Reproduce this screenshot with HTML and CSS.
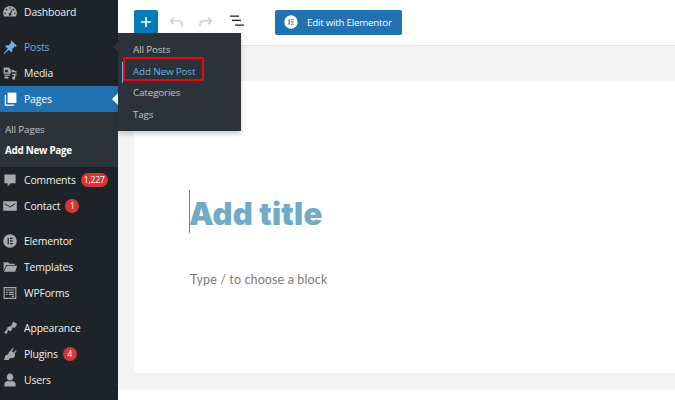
FILE: index.html
```html
<!DOCTYPE html>
<html lang="en">
<head>
<meta charset="utf-8">
<title>Add New Page</title>
<link rel="stylesheet" href="styles.css">
</head>
<body>
<div class="app">
  <nav class="sidebar">
    <a class="item first"><svg class="ic" viewBox="0 0 20 20"><path d="M10 2.500a8.500 8.500 0 0 0-7.200 13l1.600.2h11.200l1.600-.2A8.500 8.500 0 0 0 10 2.500zM10 4a1 1 0 1 1 0 2 1 1 0 0 1 0-2zM5.500 6a1 1 0 1 1 0 2 1 1 0 0 1 0-2zm9 0a1 1 0 1 1 0 2 1 1 0 0 1 0-2zM4 10.500a1 1 0 1 1 0 2 1 1 0 0 1 0-2zm12 0a1 1 0 1 1 0 2 1 1 0 0 1 0-2zM12.500 6.500l.9.500-2.100 4.800a1.700 1.700 0 1 1-1.300-.6z" fill-rule="evenodd"/></svg><span>Dashboard</span></a>
    <a class="item gap current-parent"><svg class="ic" viewBox="0 0 20 20"><path d="M11.500 1.500l7 7-1.300 1.200-1.200-.4-3.300 3.300c.6 1.700.3 3.200-.7 4.400L8.500 13.500l-5.800 5.300-.9-.8 5.400-5.800-3.500-3.500c1.200-1 2.700-1.300 4.400-.7l3.300-3.300-.4-1.200z"/></svg><span>Posts</span></a>
    <a class="item"><svg class="ic" viewBox="0 0 20 20"><path d="M2 3h7l1 2h1v6H2zm3.500 2.500a2 2 0 1 0 0 4 2 2 0 0 0 0-4zM12 6h2.500l1 1.500H18V14l-1 0V9h-5zM3 12h7v1.500l-7 0zM3 14.500h5V17H3zM16.500 11v5.500a2 2 0 1 1-1.500-2V12.500h-2.500v-1.500z" fill-rule="evenodd"/></svg><span>Media</span></a>
    <a class="item active"><svg class="ic" viewBox="0 0 20 20"><path d="M7 2h11v13H7z"/><path d="M5 5v12h10v1.500H3.500V5z"/></svg><span>Pages</span><i class="notch"></i></a>
    <div class="sub">
      <a class="sub-link">All Pages</a>
      <a class="sub-link on">Add New Page</a>
    </div>
    <a class="item"><svg class="ic" viewBox="0 0 20 20"><path d="M3 3h14v11h-6l-4 4v-4H3z"/></svg><span>Comments</span><b class="badge">1,227</b></a>
    <a class="item"><svg class="ic" viewBox="0 0 20 20"><path d="M1.500 4h17v12h-17zM3.500 6.500v1.300l6.500 4 6.500-4V6.500l-6.500 4z" fill-rule="evenodd"/></svg><span>Contact</span><b class="badge round">1</b></a>
    <a class="item gap"><svg class="ic" viewBox="0 0 20 20"><path d="M10 1.500a8.500 8.500 0 1 0 0 17 8.500 8.500 0 0 0 0-17zM7 6h1.500v8H7zm3 0h3.500v1.500H10zm0 3.200h3.500v1.500H10zm0 3.300h3.500V14H10z" fill-rule="evenodd"/></svg><span>Elementor</span></a>
    <a class="item"><svg class="ic" viewBox="0 0 20 20"><path d="M2 4h6l1.500 2H16v1.500H5L2 15zM5.800 8.500H19L16.500 16H2.500z"/></svg><span>Templates</span></a>
    <a class="item"><svg class="ic" viewBox="0 0 20 20"><path d="M2 2.500h16v15H2zM3.500 4v12h13V4zM5 5.500h10V7H5zm0 3h2v1.500H5zm3.500 0H15v1.500H8.500zM5 11h2v1.500H5zm3.500 0H15v1.500H8.500zM12 13.500h3V15h-3z" fill-rule="evenodd"/></svg><span>WPForms</span></a>
    <a class="item gap"><svg class="ic" viewBox="0 0 20 20"><path d="M14 2l5 3-3 5-3.500-1.500-1.500-.5zM10.500 7.500l3 1.700-2.500 5.300-3.500-2-1.500 5-3.500-2 4.500-4.500-1.500-1z"/></svg><span>Appearance</span></a>
    <a class="item"><svg class="ic" viewBox="0 0 20 20"><path d="M13.500 2.500l1.300 1-2.500 3.200 2.200 1.700 2.500-3.200 1.300 1-2.500 3.300c1 1.700.6 3.500-.8 4.800-1.300 1.100-3 1.300-4.500.5L8 17.500H2.500l1.500-5.200 4.500-2.600-.8-1 1.200-.9z"/></svg><span>Plugins</span><b class="badge round">4</b></a>
    <a class="item"><svg class="ic" viewBox="0 0 20 20"><path d="M10 2a4 4 0 0 1 4 4.500c0 2-1.500 4-4 4s-4-2-4-4A4 4 0 0 1 10 2zM3 18v-3c0-2 2-3.500 4.500-3.800 1.500.8 3.500.8 5 0C15 11.500 17 13 17 15v3z"/></svg><span>Users</span></a>
  </nav>

  <div class="flyout">
    <i class="fly-arrow"></i>
    <a class="fly-link">All Posts</a>
    <a class="fly-link picked">Add New Post</a>
    <a class="fly-link">Categories</a>
    <a class="fly-link">Tags</a>
  </div>

  <main class="main">
    <header class="toolbar">
      <button class="plus"><svg viewBox="0 0 24 24" width="24" height="24"><path d="M11.200 7h1.600v4.200H17v1.600h-4.200V17h-1.600v-4.200H7v-1.600h4.200z" fill="#fff"/></svg></button>
      <svg class="tool undo" viewBox="0 0 24 24" width="24" height="24"><path d="M18 17v-2.500c0-2.200-1.300-3.600-3.300-3.600H7M10 7.500l-3.500 3.400 3.500 3.400" fill="none" stroke="#c4c8cb" stroke-width="1.300"/></svg>
      <svg class="tool redo" viewBox="0 0 24 24" width="24" height="24"><path d="M6 17v-2.500c0-2.200 1.300-3.600 3.300-3.600H17M14 7.500l3.500 3.400-3.500 3.400" fill="none" stroke="#c4c8cb" stroke-width="1.300"/></svg>
      <svg class="tool list" viewBox="0 0 24 24" width="24" height="24"><path d="M6 5.500h9v1.200H6zM8 9.800h9V11H8zM11 14.600h9v1.200h-9z" fill="#1e1e1e"/></svg>
      <button class="elementor"><svg viewBox="0 0 20 20" width="14" height="14"><path d="M10 .5a9.500 9.500 0 1 0 0 19 9.500 9.500 0 0 0 0-19zM6.500 6h1.700v8H6.500zm3.500 0h3.800v1.600H10zm0 3.200h3.800v1.600H10zm0 3.200h3.800V14H10z" fill="#fff" fill-rule="evenodd"/></svg><span>Edit with Elementor</span></button>
    </header>
    <section class="stage">
      <div class="canvas">
        <h1 class="title"><i class="caret"></i>Add title</h1>
        <p class="hint">Type / to choose a block</p>
      </div>
    </section>
    <div class="foot"></div>
  </main>
</div>
</body>
</html>
```
FILE: styles.css
```css
* { box-sizing: border-box; }
html, body { margin: 0; height: 100%; overflow: hidden; background: #fff; }
body { font-family: "Open Sans", "Liberation Sans", sans-serif; }
.app { position: relative; display: flex; width: 675px; height: 400px; overflow: hidden; }

.sidebar { flex: 0 0 118px; height: 400px; background: #1d2327; color: #f0f0f1; font-size: 10.400px; letter-spacing: -.15px; }
.item { position: relative; display: flex; align-items: center; height: 26px; padding-left: 2px; }
.item.first { height: 25px; padding-bottom: 1px; }
.item.gap { margin-top: 9px; }
.ic { flex: 0 0 16px; width: 16px; height: 16px; margin-right: 6px; fill: #a7aaad; }
.current-parent { color: #72aee6; }
.current-parent .ic { fill: #72aee6; }
.active { background: #2271b1; color: #fff; }
.active .ic { fill: #fff; }
.notch { position: absolute; right: 0; top: 7px; border: 6px solid transparent; border-right-color: #fff; border-left-width: 0; }
.sub { background: #2c3338; height: 55px; padding: 7px 0 0 5px; font-size: 9.800px; letter-spacing: -.1px; color: #c3c4c7; }
.sub-link { display: block; height: 21px; line-height: 21px; }
.sub-link.on { color: #fff; font-weight: 700; letter-spacing: -.25px; }
.badge { margin-left: 5px; height: 14px; min-width: 14px; padding: 0 3px; border-radius: 7px; background: #d63638; color: #fff; font-size: 8.500px; letter-spacing: -.1px; font-weight: 400; line-height: 14px; text-align: center; }
.badge.round { padding: 0; }

.flyout { position: absolute; left: 118px; top: 33px; width: 123px; height: 98px; padding-top: 6px; background: #2c3338; box-shadow: 0 3px 5px rgba(0, 0, 0, .2); font-size: 9.800px; letter-spacing: -.12px; color: #c3c4c7; z-index: 2; }
.fly-arrow { position: absolute; left: -5px; top: 8px; border: 6px solid transparent; border-right-color: #2c3338; border-left-width: 0; }
.fly-link { position: relative; display: block; height: 21.700px; line-height: 22px; padding-left: 15px; }
.picked { color: #72aee6; }
.picked::before { content: ""; position: absolute; left: 4px; top: 1px; width: 1px; height: 21px; background: #72aee6; }
.picked::after { content: ""; box-sizing: border-box; position: absolute; left: 5px; top: -4px; width: 81px; height: 24px; border: 2px solid #e80613; }

.main { flex: 1; display: flex; flex-direction: column; min-width: 0; }
.toolbar { display: flex; align-items: center; flex: 0 0 46px; height: 46px; padding: 0 0 0 16px; background: #fff; border-bottom: 1px solid #e4e4e4; }
.plus { display: flex; align-items: center; justify-content: center; width: 24px; height: 24px; margin: -1px 0 0; padding: 0; border: 0; border-radius: 2px; background: #007cba; }
.tool { flex: 0 0 24px; margin-top: -1px; }
.undo { margin-left: 6px; }
.redo { margin-left: 6px; }
.list { margin-left: 6px; }
.elementor { display: flex; align-items: center; width: 127px; height: 25px; margin: -1px 0 0 27px; padding: 0 0 0 9px; border: 0; border-radius: 2px; background: #2271b1; color: #fff; white-space: nowrap; letter-spacing: -.2px; font: 400 9.800px "Open Sans", sans-serif; }
.elementor span { margin-left: 9px; letter-spacing: -.25px; }

.stage { flex: 0 0 342px; padding: 35px 0 15px 16px; background: #f3f3f3; }
.canvas { height: 292px; padding: 109px 0 0 56px; background: #fff; }
.title { position: relative; margin: 0; font: 900 31px/48px Inter, sans-serif; letter-spacing: .2px; text-indent: -1px; color: #71abc8; height: 44px; }
.caret { position: absolute; left: -1px; top: 0; width: 1px; height: 43px; background: #5d8ea6; }
.hint { margin: 38px 0 0; font: 400 12.500px/16px Lato, sans-serif; letter-spacing: .13px; color: #7a7a7a; }
.foot { flex: 1; border-top: 1px solid #ebebeb; background: #fff; }
```
